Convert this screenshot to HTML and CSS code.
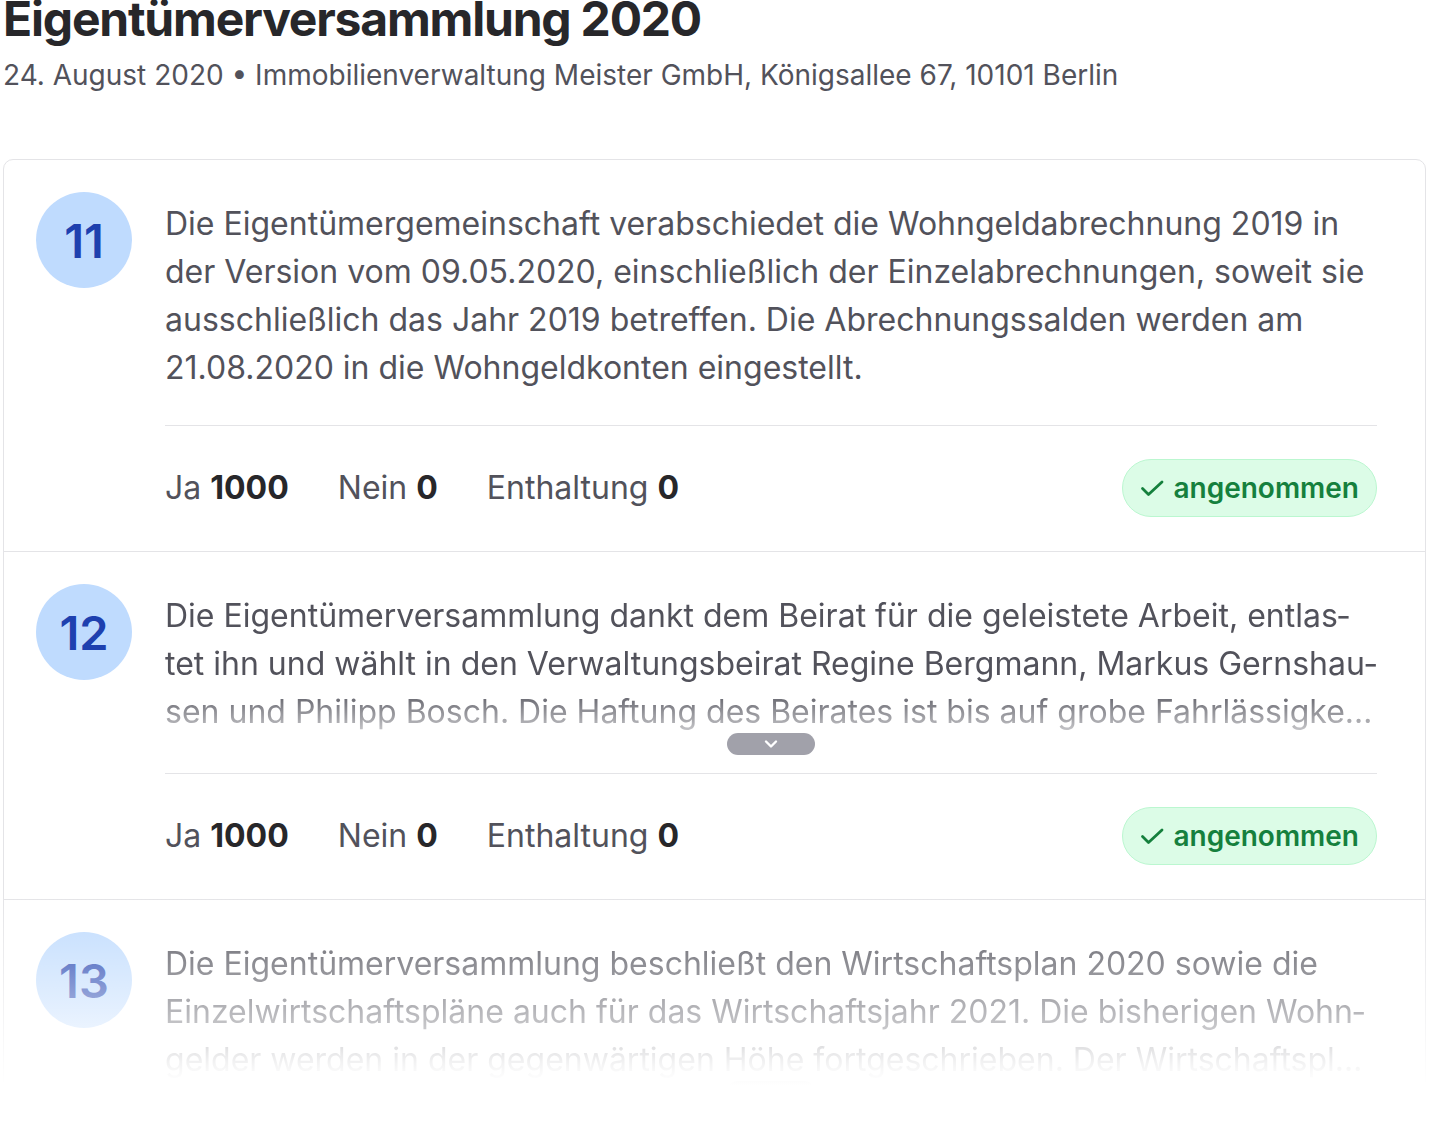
FILE: index.html
```html
<!DOCTYPE html>
<html lang="de">
  <head>
    <meta charset="UTF-8" />
    <meta name="viewport" content="width=device-width, initial-scale=1.0" />
    <title>Eigentümerversammlung 2020</title>
    <link rel="stylesheet" href="styles.css">
  </head>
  <body>
    <div class="page">
      <header class="header">
        <h1>Eigentümerversammlung 2020</h1>
        <p class="meta">24. August 2020 • Immobilienverwaltung Meister GmbH, Königsallee 67, 10101 Berlin</p>
      </header>

      <div class="list">
        <section class="item">
          <div class="number">11</div>
          <div class="body">
            <p class="text">Die Eigentümergemeinschaft verabschiedet die Wohngeldabrechnung 2019 in der Version vom 09.05.2020, einschließlich der Einzelabrechnungen, soweit sie ausschließlich das Jahr 2019 betreffen. Die Abrechnungssalden werden am 21.08.2020 in die Wohngeldkonten eingestellt.</p>
            <div class="votes">
              <span class="vote">Ja <b>1000</b></span>
              <span class="vote">Nein <b>0</b></span>
              <span class="vote">Enthaltung <b>0</b></span>
              <span class="badge">
                <svg width="24" height="24" viewBox="0 0 24 24" fill="none" stroke="currentColor" stroke-width="2.8" stroke-linecap="round" stroke-linejoin="round"><path d="M2.5 12.5l6 6L22 6"/></svg>
                angenommen
              </span>
            </div>
          </div>
        </section>

        <section class="item">
          <div class="number">12</div>
          <div class="body">
            <p class="text clamped">Die Eigentümerversammlung dankt dem Beirat für die geleistete Arbeit, entlas&shy;tet ihn und wählt in den Verwaltungsbeirat Regine Bergmann, Markus Gernshau&shy;sen und Philipp Bosch. Die Haftung des Beirates ist bis auf grobe Fahrlässigkeit und Vorsatz ausgeschlossen.</p>
            <button class="more">
              <svg width="14" height="10" viewBox="0 0 14 10" fill="none" stroke="#fff" stroke-width="2.4" stroke-linecap="round" stroke-linejoin="round"><path d="M2 2.5l5 5 5-5"/></svg>
            </button>
            <div class="votes">
              <span class="vote">Ja <b>1000</b></span>
              <span class="vote">Nein <b>0</b></span>
              <span class="vote">Enthaltung <b>0</b></span>
              <span class="badge">
                <svg width="24" height="24" viewBox="0 0 24 24" fill="none" stroke="currentColor" stroke-width="2.8" stroke-linecap="round" stroke-linejoin="round"><path d="M2.5 12.5l6 6L22 6"/></svg>
                angenommen
              </span>
            </div>
          </div>
        </section>

        <section class="item">
          <div class="number">13</div>
          <div class="body">
            <p class="text clamped">Die Eigentümerversammlung beschließt den Wirtschaftsplan 2020 sowie die Einzelwirtschaftspläne auch für das Wirtschaftsjahr 2021. Die bisherigen Wohn&shy;gelder werden in der gegenwärtigen Höhe fortgeschrieben. Der Wirtschaftsplan 2021 gilt bis zur Beschlussfassung über einen neuen Wirtschaftsplan fort.</p>
            <button class="more">
              <svg width="14" height="10" viewBox="0 0 14 10" fill="none" stroke="#fff" stroke-width="2.4" stroke-linecap="round" stroke-linejoin="round"><path d="M2 2.5l5 5 5-5"/></svg>
            </button>
            <div class="votes">
              <span class="vote">Ja <b>1000</b></span>
              <span class="vote">Nein <b>0</b></span>
              <span class="vote">Enthaltung <b>0</b></span>
              <span class="badge">
                <svg width="24" height="24" viewBox="0 0 24 24" fill="none" stroke="currentColor" stroke-width="2.8" stroke-linecap="round" stroke-linejoin="round"><path d="M2.5 12.5l6 6L22 6"/></svg>
                angenommen
              </span>
            </div>
          </div>
        </section>

        <div class="fade"></div>
      </div>
    </div>
  </body>
</html>
```

FILE: styles.css
```css
body {
  margin: 0;
  padding: 0;
  font-family: Inter, "Noto Sans", sans-serif;
  color: #52525b;
  background: #ffffff;
  overflow: hidden;
}

.page {
  padding: 0 4px 0 3px;
}

.header h1 {
  margin: -5px 0 0 0;
  font-size: 48px;
  line-height: 48px;
  font-weight: 700;
  letter-spacing: -1.2px;
  color: #27272a;
}

.meta {
  margin: 14px 0 0 0;
  font-size: 28px;
  line-height: 36px;
  color: #52525b;
}

.list {
  position: relative;
  margin-top: 66px;
  border: 1px solid #e4e4e7;
  border-radius: 10px;
}

.item {
  display: flex;
  gap: 33px;
  padding: 32px 48px 0 32px;
  border-bottom: 1px solid #e4e4e7;
}

.item:last-of-type {
  border-bottom: none;
}

.number {
  flex: none;
  width: 96px;
  height: 96px;
  border-radius: 50%;
  background: #bfdbfe;
  color: #1e40af;
  font-size: 47px;
  font-weight: 600;
  display: flex;
  align-items: center;
  justify-content: center;
}

.body {
  flex: 1;
  min-width: 0;
  padding-top: 8px;
}

.text {
  margin: 0 0 33px 0;
  font-size: 32px;
  line-height: 48px;
  color: #52525b;
}

.text.clamped {
  margin-bottom: 0;
  display: -webkit-box;
  -webkit-box-orient: vertical;
  -webkit-line-clamp: 3;
  overflow: hidden;
  -webkit-mask-image: linear-gradient(to bottom, #000 96px, rgba(0, 0, 0, 0.25) 144px);
}

.more {
  display: flex;
  align-items: center;
  justify-content: center;
  width: 88px;
  height: 22px;
  margin: -3px auto 18px auto;
  padding: 0;
  border: none;
  border-radius: 11px;
  background: #a1a1aa;
  cursor: pointer;
}

.votes {
  display: flex;
  align-items: center;
  gap: 49px;
  border-top: 1px solid #e4e4e7;
  padding: 33px 0 34px 0;
  font-size: 32px;
  line-height: 58px;
}

.vote b {
  font-weight: 700;
  color: #27272a;
}

.badge {
  margin-left: auto;
  display: flex;
  align-items: center;
  gap: 9px;
  height: 56px;
  padding: 0 17px 0 17px;
  border: 1px solid #bbf7d0;
  border-radius: 29px;
  background: #dcfce7;
  color: #15803d;
  font-size: 28px;
  font-weight: 600;
}

.fade {
  position: absolute;
  left: -2px;
  right: -2px;
  top: 735px;
  height: 460px;
  background: linear-gradient(to bottom, rgba(255, 255, 255, 0) 0, rgba(255, 255, 255, 0.55) 110px, #fff 190px);
  pointer-events: none;
}
```
